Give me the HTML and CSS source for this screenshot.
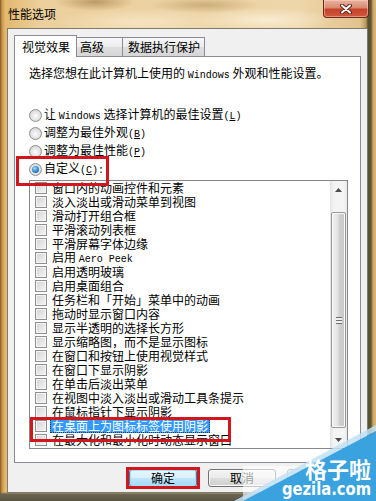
FILE: index.html
```html
<!DOCTYPE html>
<html lang="zh-CN">
<head>
    <meta charset="UTF-8">
    <title>性能选项</title>
    <link rel="stylesheet" href="styles.css">
</head>
<body>
    <div class="titlebar">
        <span class="title">性能选项</span>
        <div class="close-btn">
            <svg width="14" height="10" viewBox="0 0 14 10">
                <path d="M3 1.5 L11 8.5 M11 1.5 L3 8.5" stroke="#5a2418" stroke-width="4" stroke-linecap="round"/>
                <path d="M3 1.5 L11 8.5 M11 1.5 L3 8.5" stroke="#fff" stroke-width="2" stroke-linecap="round"/>
            </svg>
        </div>
    </div>

    <div class="client">
        <div class="tabs">
            <div class="tab active">视觉效果</div>
            <div class="tab tab-adv">高级</div>
            <div class="tab tab-dep">数据执行保护</div>
        </div>

        <div class="panel">
            <p class="intro">选择您想在此计算机上使用的 <span class="latin">Windows</span> 外观和性能设置。</p>

            <div class="radios">
                <div class="radio-row"><span class="radio"></span><span>让 <span class="latin">Windows</span> 选择计算机的最佳设置<span class="latin">(<u>L</u>)</span></span></div>
                <div class="radio-row"><span class="radio"></span><span>调整为最佳外观<span class="latin">(<u>B</u>)</span></span></div>
                <div class="radio-row"><span class="radio"></span><span>调整为最佳性能<span class="latin">(<u>P</u>)</span></span></div>
                <div class="radio-row marked"><span class="radio checked"></span><span>自定义<span class="latin">(<u>C</u>):</span></span></div>
            </div>

            <div class="listbox">
                <ul class="items">
                    <li><span class="check"></span><span class="label">窗口内的动画控件和元素</span></li>
                    <li><span class="check"></span><span class="label">淡入淡出或滑动菜单到视图</span></li>
                    <li><span class="check"></span><span class="label">滑动打开组合框</span></li>
                    <li><span class="check"></span><span class="label">平滑滚动列表框</span></li>
                    <li><span class="check"></span><span class="label">平滑屏幕字体边缘</span></li>
                    <li><span class="check"></span><span class="label">启用 <span class="latin">Aero Peek</span></span></li>
                    <li><span class="check"></span><span class="label">启用透明玻璃</span></li>
                    <li><span class="check"></span><span class="label">启用桌面组合</span></li>
                    <li><span class="check"></span><span class="label">任务栏和「开始」菜单中的动画</span></li>
                    <li><span class="check"></span><span class="label">拖动时显示窗口内容</span></li>
                    <li><span class="check"></span><span class="label">显示半透明的选择长方形</span></li>
                    <li><span class="check"></span><span class="label">显示缩略图，而不是显示图标</span></li>
                    <li><span class="check"></span><span class="label">在窗口和按钮上使用视觉样式</span></li>
                    <li><span class="check"></span><span class="label">在窗口下显示阴影</span></li>
                    <li><span class="check"></span><span class="label">在单击后淡出菜单</span></li>
                    <li><span class="check"></span><span class="label">在视图中淡入淡出或滑动工具条提示</span></li>
                    <li><span class="check"></span><span class="label">在鼠标指针下显示阴影</span></li>
                    <li class="marked"><span class="check"></span><span class="label selected">在桌面上为图标标签使用阴影</span></li>
                    <li><span class="check"></span><span class="label">在最大化和最小化时动态显示窗口</span></li>
                </ul>
                <div class="scrollbar">
                    <div class="arrow"><svg width="7" height="4" viewBox="0 0 7 4"><path d="M0 4 L3.5 0 L7 4 Z" fill="#4d4d4d"/></svg></div>
                    <div class="track">
                        <div class="thumb"><span class="grip"></span></div>
                    </div>
                    <div class="arrow"><svg width="7" height="4" viewBox="0 0 7 4"><path d="M0 0 L3.5 4 L7 0 Z" fill="#4d4d4d"/></svg></div>
                </div>
            </div>
        </div>

        <div class="buttons">
            <button class="btn default marked">确定</button>
            <button class="btn">取消</button>
            <button class="btn btn-hidden">应用</button>
        </div>
    </div>

    <svg class="watermark" width="376" height="501" viewBox="0 0 376 501">
        <rect x="243" y="466" width="133" height="35" fill="#fff" opacity="0.6"/>
        <polygon points="234,501 376,425 376,431 243,501" fill="#bfe1f5" opacity="0.85"/>
        <polygon points="243,501 376,431 376,501" fill="#39a2df"/>
        <text x="371" y="478" text-anchor="end" class="wm-cn">格子啦</text>
        <text x="282" y="495" textLength="89" lengthAdjust="spacingAndGlyphs" class="wm-en">gezila.com</text>
    </svg>
</body>
</html>
```

FILE: styles.css
```css
* {
    box-sizing: border-box;
}
body {
    margin: 0;
    width: 376px;
    height: 501px;
    overflow: hidden;
    position: relative;
    font: 12px/14px "Noto Sans CJK SC", sans-serif;
    color: #000;
    background:
        radial-gradient(ellipse 40px 9px at 95px 2px, rgba(150,110,55,.55), transparent),
        radial-gradient(ellipse 55px 8px at 205px 5px, rgba(165,125,70,.45), transparent),
        radial-gradient(ellipse 70px 12px at 265px 20px, rgba(255,246,228,.7), transparent),
        radial-gradient(ellipse 90px 14px at 140px 22px, rgba(255,242,218,.55), transparent),
        linear-gradient(to bottom, transparent 492px, #6d6650 494px, #585344 501px),
        linear-gradient(to right, #7d5a28 0, #c8944a 2px, #e3b86e 5px, #ebcf9c 40px, #edd6aa 300px, #e2c38c 360px, #b79b5e 366px, #56502f 368px, #5f5632 371px, #c9a565 373px, #dcb77a 376px);
}
.titlebar {
    height: 28px;
    display: flex;
    justify-content: space-between;
    align-items: center;
    padding-left: 8px;
}
.close-btn {
    align-self: flex-start;
    width: 46px;
    height: 18px;
    margin-right: 7px;
    border: 1px solid #6b2a1c;
    border-top: none;
    border-radius: 0 0 4px 4px;
    background: linear-gradient(#eab4a0 0%, #d98a70 45%, #c5432a 55%, #d2583c 100%);
    box-shadow: inset 0 0 0 1px rgba(255,220,200,.45);
    display: flex;
    align-items: center;
    justify-content: center;
}
.client {
    margin-left: 7px;
    width: 361px;
    height: 465px;
    background: #f0f0f0;
    border: 1px solid #7d7a70;
    padding: 6px 6px 0 6px;
    display: flex;
    flex-direction: column;
}
.latin {
    font-family: "Liberation Mono", monospace;
    font-size: 10px;
}

/* tabs */
.tabs {
    display: flex;
    align-items: flex-end;
    height: 21px;
    position: relative;
    z-index: 1;
}
.tab {
    height: 19px;
    border: 1px solid #898c95;
    border-bottom: none;
    display: flex;
    align-items: center;
    background: linear-gradient(#f7f7f7 0%, #ececec 50%, #dedede 51%, #d6d6d6 100%);
}
.tab.active {
    width: 63px;
    height: 22px;
    margin-bottom: -1px;
    padding-left: 7px;
    background: #fff;
}
.tab-adv {
    width: 46px;
    padding-left: 3px;
    border-left: none;
}
.tab-dep {
    width: 82px;
    padding-left: 5px;
    border-left: none;
}

/* panel */
.panel {
    height: 407px;
    background: #fff;
    border: 1px solid #898c95;
    padding: 9px 12px 0 14px;
}
.intro {
    margin: 0;
}
.radios {
    margin-top: 23px;
}
.radio-row {
    height: 18px;
    display: flex;
    align-items: center;
    position: relative;
}
.radio {
    width: 13px;
    height: 13px;
    margin-right: 2px;
    border-radius: 50%;
    border: 1px solid #8f8f8f;
    background: radial-gradient(circle at 50% 55%, #fdfdfd 0, #e6e6e6 45%, #c9c9c9 100%);
    position: relative;
}
.radio.checked::after {
    content: "";
    position: absolute;
    left: 2px;
    top: 2px;
    width: 7px;
    height: 7px;
    border-radius: 50%;
    background: radial-gradient(circle at 40% 35%, #a9dcf8 0, #2f8bd3 50%, #1a4f8e 100%);
}
.marked::before {
    content: "";
    position: absolute;
    border: 3px solid #d2161e;
    pointer-events: none;
    z-index: 2;
}
.radio-row.marked::before {
    left: -13px;
    top: -4px;
    width: 87px;
    height: 24px;
}

/* list */
.listbox {
    margin-top: 2px;
    width: 319px;
    height: 269px;
    border: 1px solid #828790;
    display: flex;
}
.items {
    flex: 1;
    list-style: none;
    margin: 0;
    padding: 0 0 0 5px;
}
.items li {
    height: 14px;
    display: flex;
    align-items: center;
    position: relative;
}
.check {
    width: 12px;
    height: 12px;
    margin-right: 3px;
    border: 1px solid #8e8f8f;
    background: linear-gradient(135deg, #d2d2d2 0%, #e8e8e8 60%, #f7f7f7 100%);
    box-shadow: inset 0 0 0 1px #f4f4f4;
}
.label {
    padding: 0 2px;
    white-space: nowrap;
}
.label.selected {
    background: #3399ff;
    color: #fff;
    outline: 1px dotted #1c3f66;
    outline-offset: -1px;
}
.items li.marked::before {
    left: -5px;
    top: -2px;
    width: 195px;
    height: 19px;
}
.scrollbar {
    width: 17px;
    display: flex;
    flex-direction: column;
    background: linear-gradient(to right, #e3e3e3, #f3f3f3 20%, #f5f5f5 80%, #e8e8e8);
}
.arrow {
    height: 17px;
    display: flex;
    align-items: center;
    justify-content: center;
}
.track {
    flex: 1;
    padding: 14px 0 3px 1px;
}
.thumb {
    width: 15px;
    height: 216px;
    border: 1px solid #979797;
    border-radius: 2px;
    background: linear-gradient(to right, #f2f2f2 0%, #e2e2e2 45%, #d0d0d0 55%, #c6c6c6 100%);
    box-shadow: inset 0 0 0 1px #fafafa;
    display: flex;
    align-items: center;
    justify-content: center;
}
.grip {
    width: 6px;
    height: 7px;
    background: repeating-linear-gradient(#6f6f6f 0 1px, #f0f0f0 1px 3px);
}

/* buttons */
.buttons {
    display: flex;
    justify-content: flex-end;
    gap: 11px;
    margin-top: 6px;
    padding-right: 6px;
}
.btn {
    width: 68px;
    height: 18px;
    padding: 0;
    font: 12px/14px "Noto Sans CJK SC", sans-serif;
    color: #000;
    border: 1px solid #707070;
    border-radius: 3px;
    background: linear-gradient(#f3f3f3 0%, #ebebeb 50%, #dddddd 51%, #cfcfcf 100%);
    box-shadow: inset 0 0 0 1px #fbfbfb;
    position: relative;
}
.btn-hidden {
    color: #d8d8d8;
}
.btn.default {
    border-color: #3c7fb1;
    background: linear-gradient(#eaf6fd 0%, #d9f0fc 50%, #bee6fd 51%, #a7d9f5 100%);
    box-shadow: inset 0 0 0 1px #9fe1ff;
}
.btn.marked::before {
    left: -4px;
    top: -3px;
    right: -4px;
    bottom: -3px;
}

/* watermark */
.watermark {
    position: absolute;
    left: 0;
    top: 0;
    pointer-events: none;
}
.wm-cn {
    font: bold 22px "Noto Sans CJK SC", sans-serif;
    fill: #fff;
}
.wm-en {
    font: bold 17px "DejaVu Sans", sans-serif;
    fill: #fff;
}
```
